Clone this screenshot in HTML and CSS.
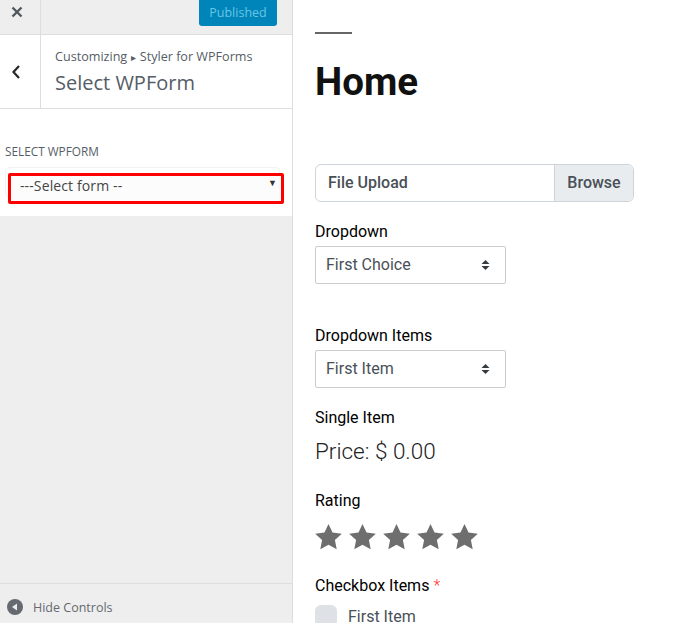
FILE: index.html
```html
<!DOCTYPE html>
<html lang="en">
<head>
<meta charset="utf-8">
<title>Select WPForm</title>
<link rel="stylesheet" href="styles.css">
</head>
<body>
<div class="app">
  <aside class="sidebar">
    <div class="topbar">
      <div class="close">
        <svg width="12" height="12" viewBox="0 0 12 12"><path d="M1.500 1.500l9 9M10.500 1.500l-9 9" stroke="#50575e" stroke-width="2.400" fill="none"/></svg>
      </div>
      <div class="topbar-right"><div class="publish">Published</div></div>
    </div>
    <div class="panel-head">
      <div class="back">
        <svg width="10" height="16" viewBox="0 0 10 16"><path d="M8 2L2.500 8 8 14" stroke="#23282d" stroke-width="2.200" fill="none"/></svg>
      </div>
      <div class="panel-title">
        <div class="crumb">Customizing <span class="sep">▸</span> Styler for WPForms</div>
        <div class="title">Select WPForm</div>
      </div>
    </div>
    <div class="section">
      <div class="label">SELECT WPFORM</div>
      <div class="select-wrap">
        <div class="select-red">
          <span>---Select form --</span>
          <span class="caret">▼</span>
        </div>
      </div>
    </div>
    <div class="spacer"></div>
    <div class="footer">
      <svg class="hide-icon" width="16" height="16" viewBox="0 0 16 16"><circle cx="8" cy="8" r="8" fill="#656a70"/><path d="M10 4.500v7L5 8z" fill="#eee"/></svg>
      <span>Hide Controls</span>
    </div>
  </aside>
  <main class="content">
    <div class="rule"></div>
    <h1 class="page-title">Home</h1>
    <div class="file">
      <div class="file-name">File Upload</div>
      <div class="file-btn">Browse</div>
    </div>
    <div class="field-label lbl-dropdown">Dropdown</div>
    <div class="dropdown">
      <span>First Choice</span>
      <svg width="9" height="12" viewBox="0 0 9 12"><path d="M4.500 1L8.500 5H.5zM4.500 11L.5 7h8z" fill="#343a40"/></svg>
    </div>
    <div class="field-label lbl-items">Dropdown Items</div>
    <div class="dropdown">
      <span>First Item</span>
      <svg width="9" height="12" viewBox="0 0 9 12"><path d="M4.500 1L8.500 5H.5zM4.500 11L.5 7h8z" fill="#343a40"/></svg>
    </div>
    <div class="field-label lbl-single">Single Item</div>
    <div class="price">Price: $ 0.00</div>
    <div class="field-label lbl-rating">Rating</div>
    <div class="stars">
      <svg width="27" height="26" viewBox="0 0 27 26"><path d="M13.500 0l4 8.600 9.300 1.100-6.900 6.400 1.800 9.200-8.200-4.600-8.200 4.600 1.800-9.200L.2 9.700l9.300-1.100z" fill="#6e6e6e"/></svg>
      <svg width="27" height="26" viewBox="0 0 27 26"><path d="M13.500 0l4 8.600 9.300 1.100-6.900 6.400 1.800 9.200-8.200-4.600-8.200 4.600 1.800-9.200L.2 9.700l9.300-1.100z" fill="#6e6e6e"/></svg>
      <svg width="27" height="26" viewBox="0 0 27 26"><path d="M13.500 0l4 8.600 9.300 1.100-6.900 6.400 1.800 9.200-8.200-4.600-8.200 4.600 1.800-9.200L.2 9.700l9.300-1.100z" fill="#6e6e6e"/></svg>
      <svg width="27" height="26" viewBox="0 0 27 26"><path d="M13.500 0l4 8.600 9.300 1.100-6.900 6.400 1.800 9.200-8.200-4.600-8.200 4.600 1.800-9.200L.2 9.700l9.300-1.100z" fill="#6e6e6e"/></svg>
      <svg width="27" height="26" viewBox="0 0 27 26"><path d="M13.500 0l4 8.600 9.300 1.100-6.900 6.400 1.800 9.200-8.200-4.600-8.200 4.600 1.800-9.200L.2 9.700l9.300-1.100z" fill="#6e6e6e"/></svg>
    </div>
    <div class="field-label lbl-check">Checkbox Items <span class="req">*</span></div>
    <div class="check-row">
      <div class="check"></div>
      <span>First Item</span>
    </div>
  </main>
</div>
</body>
</html>
```
FILE: styles.css
```css
* { box-sizing: border-box; }
html, body { margin: 0; height: 100%; overflow: hidden; background: #fff; }
.app { display: flex; width: 691px; height: 623px; overflow: hidden; }

.sidebar {
  width: 293px; flex: none; height: 623px; display: flex; flex-direction: column;
  background: #eee; border-right: 1px solid #ddd;
  font-family: "Open Sans", sans-serif; color: #555d66;
}
.topbar { height: 35px; flex: none; display: flex; border-bottom: 1px solid #ddd; }
.close { width: 41px; border-right: 1px solid #ddd; display: flex; align-items: center; justify-content: center; padding: 0 7px 11px 0; }
.topbar-right { flex: 1; display: flex; justify-content: flex-end; padding-right: 15px; }
.publish {
  width: 78px; height: 26px; background: #0085ba; border-radius: 0 0 3px 3px; color: #66c6e4;
  font-size: 12.500px; line-height: 25px; text-align: center;
}
.panel-head { height: 74px; flex: none; background: #fff; display: flex; border-bottom: 1px solid #ddd; }
.back { width: 41px; border-right: 1px solid #ddd; display: flex; align-items: center; justify-content: center; padding-right: 8px; }
.panel-title { padding: 12px 0 0 14px; }
.crumb { font-size: 12.600px; line-height: 20px; color: #555d66; white-space: nowrap; }
.sep { font-size: 10px; vertical-align: 0; margin: 0 0 0 1px; }
.title { font-size: 20px; line-height: 28px; margin-top: 2px; color: #555d66; white-space: nowrap; }

.section { height: 107px; flex: none; background: #fff; padding: 33px 0 0 5px; }
.label { font-size: 11.800px; line-height: 18px; color: #555d66; }
.select-wrap {
  margin-top: 7px; width: 275px; height: 30px; border: 1px solid #f2f2f2; border-radius: 4px;
}
.select-red {
  width: 276px; height: 31px; margin: 5px 0 0 2px; border: 3px solid #f00; border-radius: 2px;
  background: #fcfcfc; display: flex; justify-content: space-between;
  padding: 0 4px 0 9px; font-size: 14px; letter-spacing: 0.120px; line-height: 20px; color: #444;
}
.caret { font-size: 9px; line-height: 14px; color: #333; }
.spacer { flex: 1; }
.footer {
  height: 40px; flex: none; border-top: 1px solid #ddd; display: flex; align-items: center;
  padding: 7px 0 0 7px; gap: 10px; font-size: 12.500px; color: #656a70;
}
.hide-icon { flex: none; }

.content { flex: 1; padding: 32px 0 0 22px; font-family: Roboto, sans-serif; color: #000; overflow: hidden; }
.rule { width: 37px; height: 2px; background: #666; }
.page-title { margin: 26px 0 0; font-size: 38.500px; line-height: 44px; font-weight: 700; color: #111; }
.file {
  margin-top: 60px; width: 319px; height: 38px; display: flex; border: 1px solid #ced4da; border-radius: 6px;
  font-size: 16px; line-height: 35px; color: #495057; font-weight: 500; overflow: hidden;
}
.file-name { flex: 1; padding-left: 12px; }
.file-btn { width: 79px; background: #e9ecef; border-left: 1px solid #ced4da; text-align: center; }
.field-label { font-size: 16px; line-height: 20px; font-weight: 400; color: #000; }
.lbl-dropdown { margin-top: 20px; }
.lbl-items { margin-top: 42px; }
.lbl-single { margin-top: 20px; }
.lbl-rating { margin-top: 27px; }
.lbl-check { margin-top: 26px; }
.dropdown {
  margin-top: 4px; width: 191px; height: 38px; border: 1px solid #ccc; border-radius: 2px; display: flex;
  align-items: center; justify-content: space-between; padding: 0 15px 2px 10px;
  font-size: 16px; color: #495057;
}
.dropdown svg { margin-top: 2px; }
.price { margin-top: 10px; font-size: 22.500px; line-height: 26px; font-weight: 300; color: #222; }
.stars { margin-top: 13px; display: flex; gap: 7px; height: 26px; }
.req { color: #f33; font-weight: 300; }
.check-row { margin-top: 9px; display: flex; gap: 11px; align-items: center; font-size: 16px; font-weight: 400; color: #495057; }
.check { width: 22px; height: 22px; background: #dee2e6; border-radius: 6px; flex: none; }
```
